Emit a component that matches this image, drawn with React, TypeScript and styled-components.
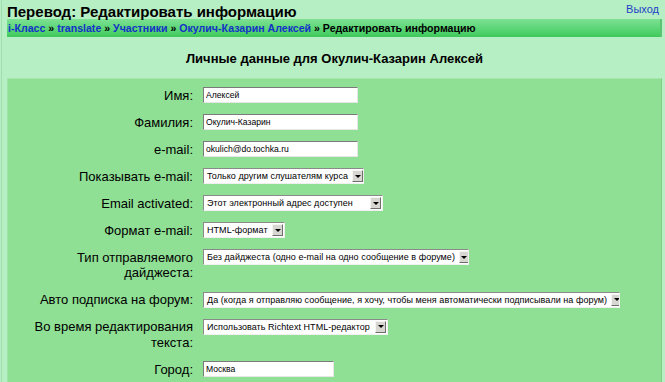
import React from "react";
import styled, { createGlobalStyle } from "styled-components";

const Global = createGlobalStyle`
  html, body { margin: 0; padding: 0; }
  body {
    background: #b6efc3;
    font-family: "Liberation Sans", Arial, sans-serif;
    color: #000;
  }
`;

const Page = styled.div`
  padding: 3px 3px 0 5px;
  border-left: 1px solid #a3dcae;
  margin-left: 1px;
  height: 379px;
  overflow: hidden;
`;

const Header = styled.div`
  display: flex;
  justify-content: space-between;
  align-items: center;
  height: 16px;
`;

const Title = styled.h1`
  margin: 0;
  font-size: 15px;
  line-height: 17px;
  font-weight: bold;
`;

const Logout = styled.a`
  font-size: 11px;
  color: #1f3fc8;
  text-decoration: none;
  margin-right: 3px;
  margin-top: -4px;
`;

const Crumbs = styled.div`
  height: 18px;
  line-height: 18px;
  font-size: 10.6px;
  font-weight: bold;
  padding-left: 1px;
  background: linear-gradient(#7ce193, #52d26e 70%, #3ec85b);
  border-right: 2px solid #5cc472;
`;

const Crumb = styled.a`
  color: #1432c8;
  text-decoration: none;
`;

const Heading = styled.h2`
  margin: 0;
  padding: 14px 0 11px;
  font-size: 13px;
  line-height: 16px;
  font-weight: bold;
  text-align: center;
`;

const FormBox = styled.div`
  background: #8fdf94;
  border-top: 1px solid #a8e6b0;
  border-left: 1px solid #a0e2a8;
  border-right: 1px solid #7fcf86;
  padding: 8px 0 10px;
  display: grid;
  grid-template-columns: 185px 1fr;
  column-gap: 10px;
  row-gap: 11px;
  align-items: start;
`;

const Label = styled.div`
  text-align: right;
  font-size: 13px;
  line-height: 15.5px;
  padding-left: 22px;
  padding-top: 0.5px;
`;

const TextInput = styled.div<{ $w: number }>`
  box-sizing: border-box;
  width: ${(p) => p.$w}px;
  height: 16px;
  background: #fff;
  border-top: 1px solid #7a7a7a;
  border-left: 1px solid #7a7a7a;
  border-right: 1px solid #e6e6e6;
  border-bottom: 1px solid #e6e6e6;
  font-size: 8.6px;
  line-height: 14px;
  padding-left: 2px;
  white-space: nowrap;
  overflow: hidden;
`;

const Select = styled.div<{ $w: number }>`
  box-sizing: border-box;
  width: ${(p) => p.$w}px;
  height: 16px;
  background: #fff;
  border-top: 1px solid #8a8a8a;
  border-left: 1px solid #8a8a8a;
  border-right: 1px solid #f0f0f0;
  border-bottom: 1px solid #f0f0f0;
  display: flex;
  align-items: center;
  justify-content: space-between;
  font-size: 9px;
  letter-spacing: 0.05px;
  padding: 0 1px 0 3px;
  white-space: nowrap;
  overflow: hidden;
`;

const Arrow = styled.span`
  box-sizing: border-box;
  width: 11px;
  height: 12px;
  background: #d8d6d0;
  border-top: 1px solid #f4f4f4;
  border-left: 1px solid #f4f4f4;
  border-right: 1px solid #6e6e6e;
  border-bottom: 1px solid #6e6e6e;
  display: flex;
  align-items: center;
  justify-content: center;
  flex-shrink: 0;
  margin-left: 4px;
  &::after {
    content: "";
    border-left: 3px solid transparent;
    border-right: 3px solid transparent;
    border-top: 3px solid #000;
  }
`;

type Row = { label: string; kind: "input" | "select"; value: string; w: number };

const rows: Row[] = [
  { label: "Имя:", kind: "input", value: "Алексей", w: 155 },
  { label: "Фамилия:", kind: "input", value: "Окулич-Казарин", w: 155 },
  { label: "e-mail:", kind: "input", value: "okulich@do.tochka.ru", w: 155 },
  { label: "Показывать e-mail:", kind: "select", value: "Только другим слушателям курса", w: 161 },
  { label: "Email activated:", kind: "select", value: "Этот электронный адрес доступен", w: 180 },
  { label: "Формат e-mail:", kind: "select", value: "HTML-формат", w: 82 },
  { label: "Тип отправляемого дайджеста:", kind: "select", value: "Без дайджеста (одно e-mail на одно сообщение в форуме)", w: 266 },
  { label: "Авто подписка на форум:", kind: "select", value: "Да (когда я отправляю сообщение, я хочу, чтобы меня автоматически подписывали на форум)", w: 417 },
  { label: "Во время редактирования текста:", kind: "select", value: "Использовать Richtext HTML-редактор", w: 185 },
  { label: "Город:", kind: "input", value: "Москва", w: 131 },
];

export default function App() {
  return (
    <>
      <Global />
      <Page>
        <Header>
          <Title>Перевод: Редактировать информацию</Title>
          <Logout href="#">Выход</Logout>
        </Header>
        <Crumbs>
          <Crumb href="#">i-Класс</Crumb> » <Crumb href="#">translate</Crumb> »{" "}
          <Crumb href="#">Участники</Crumb> » <Crumb href="#">Окулич-Казарин Алексей</Crumb> »
          Редактировать информацию
        </Crumbs>
        <Heading>Личные данные для Окулич-Казарин Алексей</Heading>
        <FormBox>
          {rows.map((r) => (
            <React.Fragment key={r.label}>
              <Label>{r.label}</Label>
              {r.kind === "input" ? (
                <TextInput $w={r.w}>{r.value}</TextInput>
              ) : (
                <Select $w={r.w}>
                  <span>{r.value}</span>
                  <Arrow />
                </Select>
              )}
            </React.Fragment>
          ))}
        </FormBox>
      </Page>
    </>
  );
}
